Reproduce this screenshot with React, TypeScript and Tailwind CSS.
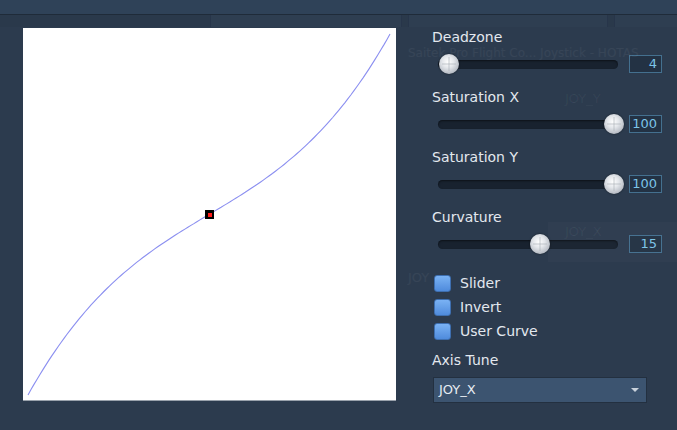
import React from 'react'

const font = { fontFamily: '"DejaVu Sans", "Noto Sans", sans-serif' }

// curve through the plot, plot-local coords
const buildCurve = () => {
  const c = 0.4
  const pts: string[] = []
  for (let i = 0; i <= 120; i++) {
    const t = -1 + (2 * i) / 120
    const v = c * t * t * t + (1 - c) * t
    const x = 186 + t * 181
    const y = 186.5 - v * 180.5
    pts.push(`${x.toFixed(1)},${y.toFixed(1)}`)
  }
  return 'M' + pts.join(' L')
}

function Knob({ left }: { left: number }) {
  return (
    <div
      className="absolute top-1/2 -translate-y-1/2 -translate-x-1/2 w-[20px] h-[20px] rounded-full bg-[radial-gradient(circle_at_45%_40%,#ffffff_0%,#e4e7eb_35%,#b9bec6_70%,#8d939c_100%)] shadow-[0_0_2px_rgba(0,0,0,0.6)]"
      style={{ left }}
    >
      <div className="absolute left-1/2 top-[3px] bottom-[3px] w-px -translate-x-1/2 bg-[#a7adb5]/60" />
      <div className="absolute top-1/2 left-[3px] right-[3px] h-px -translate-y-1/2 bg-[#a7adb5]/60" />
    </div>
  )
}

function SliderBlock({ label, value, knob }: { label: string; value: string; knob: number }) {
  return (
    <div className="flex flex-col">
      <div className="h-[18px] leading-[18px] text-[14px] text-[#e3e8ee]">{label}</div>
      <div className="mt-[8px] mb-[14px] h-[20px] flex items-center">
        <div className="relative ml-[6px] w-[180px] h-[9px] rounded-full bg-[#18222f] shadow-[inset_0_1px_2px_rgba(0,0,0,0.5)]">
          <Knob left={knob} />
        </div>
        <div className="ml-[11px] w-[33px] h-[18px] border border-[#44708f] bg-[#233244] flex items-center justify-end pr-[4px] text-[13px] text-[#7cc4e8]">
          {value}
        </div>
      </div>
    </div>
  )
}

function Check({ label }: { label: string }) {
  return (
    <div className="h-[24px] flex items-center">
      <div className="ml-[2px] w-[17px] h-[17px] rounded-[3px] bg-[linear-gradient(180deg,#7ab2f4,#4f8bdc)] border border-[#3e6fb0]" />
      <span className="ml-[9px] text-[14px] text-[#e3e8ee]">{label}</span>
    </div>
  )
}

export default function App() {
  return (
    <div className="relative w-[677px] h-[430px] overflow-hidden bg-[#2c3b4e]" style={font}>
      {/* top bar */}
      <div className="h-[15px] bg-[#2f4258] border-b border-[#1f2b39]" />
      <div className="h-[12px] flex bg-[#2a394b]">
        <div className="w-[210px]" />
        <div className="w-[192px] bg-[#2e3e51] border-x border-[#27354a]" />
        <div className="w-[6px]" />
        <div className="w-[200px] bg-[#2e3e51] border-x border-[#27354a]" />
        <div className="w-[6px]" />
        <div className="flex-1 bg-[#2e3e51] border-l border-[#27354a]" />
      </div>

      <div className="flex">
        {/* plot */}
        <div className="relative ml-[23px] mt-[1px] w-[373px] h-[373px] bg-white border-b border-[#9aa2ac]">
          <svg className="absolute inset-0" width={373} height={372} viewBox="0 0 373 372">
            <path d={buildCurve()} fill="none" stroke="#8b8ff0" strokeWidth={1.1} />
          </svg>
          <div className="absolute left-[182px] top-[182px] w-[9px] h-[9px] bg-black flex items-center justify-center">
            <div className="w-[4px] h-[4px] bg-[#ff1a1a]" />
          </div>
        </div>

        {/* controls */}
        <div className="ml-[36px] mt-[1px] w-[240px] flex flex-col">
          <SliderBlock label="Deadzone" value="4" knob={11} />
          <SliderBlock label="Saturation X" value="100" knob={176} />
          <SliderBlock label="Saturation Y" value="100" knob={176} />
          <SliderBlock label="Curvature" value="15" knob={102} />
          <div className="mt-[3px] flex flex-col">
            <Check label="Slider" />
            <Check label="Invert" />
            <Check label="User Curve" />
          </div>
          <div className="mt-[8px] h-[18px] leading-[18px] text-[14px] text-[#e3e8ee]">Axis Tune</div>
          <div className="mt-[8px] ml-[1px] w-[214px] h-[26px] bg-[#3c5470] border border-[#233040] flex items-center justify-between px-[5px]">
            <span className="text-[13px] text-[#e6ecf2]">JOY_X</span>
            <svg width="8" height="5" viewBox="0 0 8 5" className="mr-[2px]">
              <path d="M0 0 L8 0 L4 4 Z" fill="#c9d2dc" />
            </svg>
          </div>
        </div>
      </div>

      {/* faint ghost overlay texts */}
      <div className="absolute left-[408px] top-[47px] text-[12px] leading-[12px] text-white/[0.05] whitespace-nowrap">Saitek Pro Flight Co... Joystick - HOTAS</div>
      <div className="absolute left-[565px] top-[89px] text-[13px] text-white/[0.06]">JOY_Y</div>
      <div className="absolute left-[548px] top-[222px] w-[129px] h-[40px] bg-white/[0.02]" />
      <div className="absolute left-[565px] top-[222px] text-[13px] text-white/[0.06]">JOY_X</div>
      <div className="absolute left-[408px] top-[268px] text-[13px] text-white/[0.05]">JOY</div>
    </div>
  )
}
